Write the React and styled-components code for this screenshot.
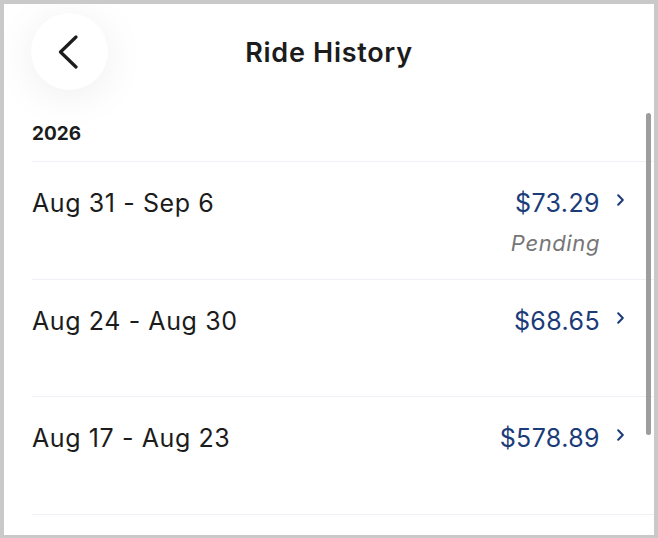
import React from 'react';
import styled, { createGlobalStyle } from 'styled-components';

const GlobalStyle = createGlobalStyle`
  html, body {
    margin: 0;
    padding: 0;
    background: #c9c9c9;
  }
  * {
    box-sizing: border-box;
  }
`;

const Frame = styled.div`
  position: relative;
  width: 658px;
  height: 538px;
  border: 4px solid #c9c9c9;
  border-bottom-width: 3px;
  background: #fff;
  overflow: hidden;
  font-family: Inter, "Noto Sans", sans-serif;
  color: #1c1c1c;
`;

const Header = styled.header`
  position: relative;
  display: flex;
  align-items: center;
  justify-content: center;
  height: 96px;
`;

const BackButton = styled.button`
  position: absolute;
  left: 27px;
  top: 9px;
  width: 77px;
  height: 77px;
  border: none;
  border-radius: 50%;
  background: #fff;
  box-shadow: 0 6px 44px rgba(0, 0, 0, 0.07);
  display: flex;
  align-items: center;
  justify-content: center;
  padding: 0 4px 0 0;
  cursor: pointer;
`;

const Title = styled.h1`
  margin: 0;
  font-size: 27px;
  font-weight: 600;
  letter-spacing: 0.7px;
  color: #1c1c1c;
`;

const Body = styled.main`
  padding-left: 28px;
`;

const YearLabel = styled.div`
  font-size: 19px;
  font-weight: 700;
  line-height: 24px;
  padding: 22px 0 15px;
  border-bottom: 1px solid #eef2f6;
`;

const Row = styled.div`
  display: flex;
  justify-content: space-between;
  align-items: flex-start;
  height: 117.5px;
  padding: 26px 30px 0 0;
  border-bottom: 1px solid #eef2f6;
`;

const DateRange = styled.span`
  font-size: 25px;
  line-height: 30px;
  font-weight: 400;
  letter-spacing: 0.6px;
  color: #1c1c1c;
`;

const RightCol = styled.div`
  display: flex;
  flex-direction: column;
  align-items: flex-end;
`;

const AmountLine = styled.div`
  display: flex;
  align-items: center;
  gap: 17px;
`;

const Amount = styled.span`
  font-size: 25px;
  line-height: 30px;
  letter-spacing: 0.4px;
  color: #1b3c78;
`;

const Status = styled.span`
  margin-right: 24px;
  margin-top: 13px;
  font-size: 22px;
  line-height: 24px;
  font-style: italic;
  letter-spacing: 0.6px;
  color: #767676;
`;

const Scrollbar = styled.div`
  position: absolute;
  right: 3px;
  top: 109px;
  width: 5px;
  height: 322px;
  border-radius: 3px;
  background: #9d9d9d;
`;

const ChevronLeft = () => (
  <svg width="22" height="34" viewBox="0 0 22 34" fill="none">
    <path d="M19 2L3.5 17L19 32" stroke="#1c1c1c" strokeWidth="3.2" strokeLinecap="round" strokeLinejoin="round" />
  </svg>
);

const ChevronRight = () => (
  <svg width="7" height="12" viewBox="0 0 7 12" fill="none" style={{ marginTop: -6 }}>
    <path d="M1.2 1.2L5.8 6L1.2 10.8" stroke="#1b3c78" strokeWidth="2" strokeLinecap="round" strokeLinejoin="round" />
  </svg>
);

const rides = [
  { range: 'Aug 31 - Sep 6', amount: '$73.29', status: 'Pending' },
  { range: 'Aug 24 - Aug 30', amount: '$68.65' },
  { range: 'Aug 17 - Aug 23', amount: '$578.89' },
];

export default function App() {
  return (
    <>
      <GlobalStyle />
      <Frame>
        <Header>
          <BackButton aria-label="Back">
            <ChevronLeft />
          </BackButton>
          <Title>Ride History</Title>
        </Header>
        <Body>
          <YearLabel>2026</YearLabel>
          {rides.map((r) => (
            <Row key={r.range}>
              <DateRange>{r.range}</DateRange>
              <RightCol>
                <AmountLine>
                  <Amount>{r.amount}</Amount>
                  <ChevronRight />
                </AmountLine>
                {r.status && <Status>{r.status}</Status>}
              </RightCol>
            </Row>
          ))}
        </Body>
        <Scrollbar />
      </Frame>
    </>
  );
}
